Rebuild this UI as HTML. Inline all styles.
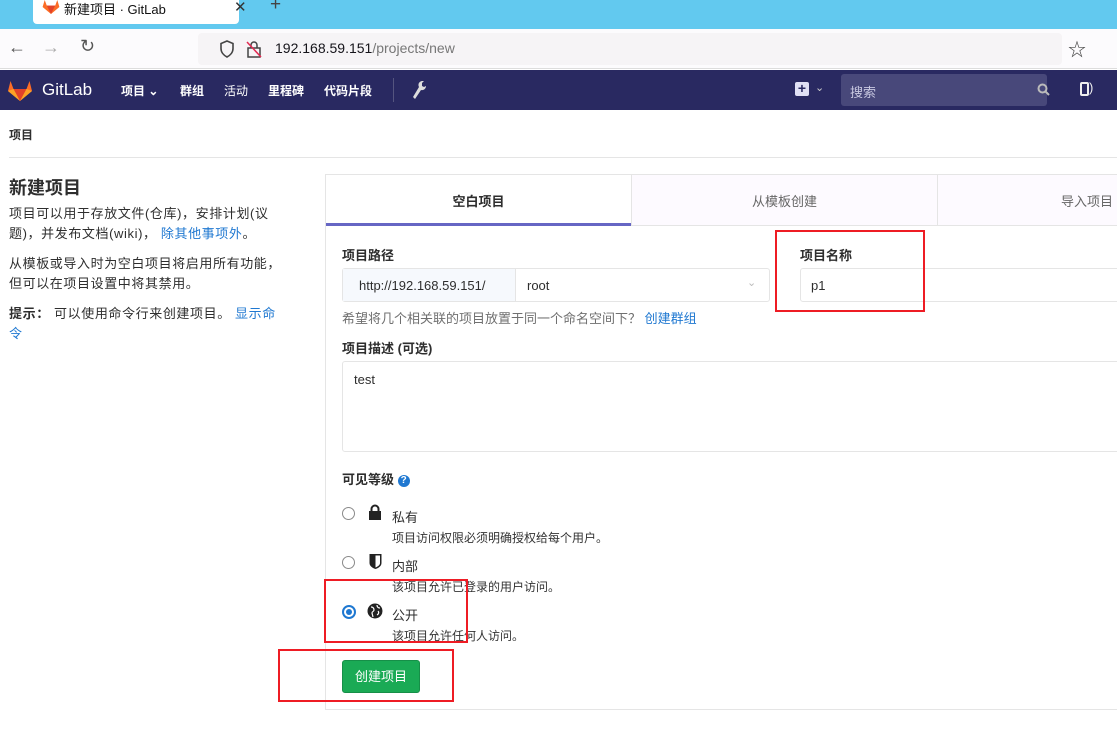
<!DOCTYPE html>
<html><head><meta charset="utf-8"><style>
*{box-sizing:border-box;margin:0;padding:0}
body{width:1117px;height:748px;overflow:hidden;background:#fff;font-family:"Liberation Sans","Noto Sans CJK SC",sans-serif;color:#2e2e2e;font-size:13px;position:relative}
.a{position:absolute}
.lbl{font-weight:bold;font-size:13px;color:#2e2e2e}
.red{position:absolute;border:2px solid #ee1c24}
.rad{position:absolute;width:13px;height:13px;border-radius:50%;border:1.5px solid #8a8a8a;background:#fff}
.lp{position:absolute;left:9px;width:282px;font-size:13px;line-height:20px;letter-spacing:0.6px;word-break:break-all}
</style></head><body>
<div class="a" style="left:0;top:0;width:1117px;height:29px;background:#62c9ef"></div>
<div class="a" style="left:33px;top:0;width:206px;height:24px;background:#fff;border-radius:0 0 4px 4px"></div>
<svg class="a" style="left:42px;top:0" width="18" height="14" viewBox="0 0 24 20"><path d="M12 20L0 10 3 0 6 8h12l3-8 3 10z" fill="#fc6d26"/><path d="M12 20L6 8h12z" fill="#e24329"/></svg>
<div class="a" style="left:64px;top:-1px;font-size:13px;color:#111">新建项目 · GitLab</div>
<div class="a" style="left:234px;top:-2px;font-size:15px;color:#333">✕</div>
<div class="a" style="left:270px;top:-6px;font-size:19px;color:#444">+</div>
<div class="a" style="left:0;top:29px;width:1117px;height:40px;background:#fcfbfd;border-bottom:1px solid #ddd"></div>
<div class="a" style="left:8px;top:37px;font-size:18px;color:#555">←</div>
<div class="a" style="left:42px;top:37px;font-size:18px;color:#aaa">→</div>
<div class="a" style="left:80px;top:36px;font-size:18px;color:#555">↻</div>
<div class="a" style="left:198px;top:33px;width:864px;height:32px;background:#f6f4f6;border-radius:4px"></div>
<svg class="a" style="left:219px;top:40px" width="16" height="18" viewBox="0 0 16 18"><path d="M8 1L2 3.5v5c0 4 3 7 6 8.5 3-1.5 6-4.5 6-8.5v-5z" fill="none" stroke="#444" stroke-width="1.6"/></svg>
<svg class="a" style="left:246px;top:40px" width="16" height="18" viewBox="0 0 16 18"><rect x="2" y="8" width="12" height="9" fill="none" stroke="#444" stroke-width="1.5"/><path d="M5 8V5a3 3 0 016 0v3" fill="none" stroke="#444" stroke-width="1.5"/><path d="M1 2l14 15" stroke="#e22850" stroke-width="1.5"/></svg>
<div class="a" style="left:275px;top:40px;font-size:14px;color:#15141a">192.168.59.151<span style="color:#777">/projects/new</span></div>
<div class="a" style="left:1068px;top:36px;font-size:18px;color:#444">☆</div>
<div class="a" style="left:0;top:70px;width:1117px;height:40px;background:#292961"></div>
<svg class="a" style="left:8px;top:78px" width="24" height="24" viewBox="0 0 24 22"><path d="M12 22L0 12 2.5 2 5.5 10h13l3-8L24 12z" fill="#fc6d26"/><path d="M12 22L5.5 10h13z" fill="#e24329"/><path d="M0 12l5.5-2L12 22z" fill="#fca326"/><path d="M24 12l-5.5-2L12 22z" fill="#fca326"/></svg>
<div class="a" style="left:42px;top:80px;font-size:17px;color:#fff">GitLab</div>
<div class="a" style="left:121px;top:82px;font-size:12px;color:#fff;font-weight:bold">项目 ⌄</div>
<div class="a" style="left:180px;top:82px;font-size:12px;color:#fff;font-weight:bold">群组</div>
<div class="a" style="left:224px;top:82px;font-size:12px;color:#fff">活动</div>
<div class="a" style="left:268px;top:82px;font-size:12px;color:#fff;font-weight:bold">里程碑</div>
<div class="a" style="left:324px;top:82px;font-size:12px;color:#fff;font-weight:bold">代码片段</div>
<div class="a" style="left:393px;top:78px;width:1px;height:24px;background:#55557f"></div>
<svg class="a" style="left:411px;top:80px" width="16" height="20" viewBox="0 0 16 20"><path d="M11 1a4 4 0 00-3 6L2 17l2 2 6-9a4 4 0 005-4l-2 1-2-1V3l2-2z" fill="#ddd"/></svg>
<div class="a" style="left:795px;top:82px;width:14px;height:14px;background:#e0e0f5;border-radius:2px;color:#292961;font-size:14px;line-height:13px;text-align:center;font-weight:bold">+</div>
<div class="a" style="left:815px;top:81px;font-size:11px;color:#ccc">⌄</div>
<div class="a" style="left:841px;top:74px;width:206px;height:32px;background:#48487a;border-radius:3px"></div>
<div class="a" style="left:850px;top:82px;font-size:13px;color:#c8c8e0">搜索</div>
<svg class="a" style="left:1037px;top:83px" width="13" height="13" viewBox="0 0 13 13"><circle cx="5.5" cy="5.5" r="4" fill="none" stroke="#bbb" stroke-width="2"/><path d="M8.5 8.5L12 12" stroke="#bbb" stroke-width="2"/></svg>
<div class="a" style="left:1080px;top:82px;width:9px;height:14px;border:2px solid #eee;border-radius:2px"></div>
<div class="a" style="left:1089px;top:80px;font-size:13px;color:#eee">)</div>
<div class="a lbl" style="left:9px;top:126px;font-size:12px">项目</div>
<div class="a" style="left:9px;top:157px;width:1108px;height:1px;background:#e5e5e5"></div>
<div class="a" style="left:9px;top:174px;font-size:18px;font-weight:bold;color:#2e2e2e">新建项目</div>
<div class="lp" style="top:204px">项目可以用于存放文件(仓库)，安排计划(议题)，并发布文档(wiki)， <span style="color:#1f78d1">除其他事项外</span>。</div>
<div class="lp" style="top:254px">从模板或导入时为空白项目将启用所有功能，但可以在项目设置中将其禁用。</div>
<div class="lp" style="top:304px;width:279px"><b>提示：</b> 可以使用命令行来创建项目。 <span style="color:#1f78d1">显示命令</span></div>
<div class="a" style="left:325px;top:174px;width:800px;height:536px;border:1px solid #e5e5e5;border-right:none"></div>
<div class="a" style="left:631px;top:175px;width:486px;height:50px;background:#fdfaff;border-left:1px solid #e5e5e5"></div>
<div class="a" style="left:937px;top:175px;width:1px;height:50px;background:#e5e5e5"></div>
<div class="a" style="left:326px;top:225px;width:791px;height:1px;background:#e5e5e5"></div>
<div class="a" style="left:326px;top:223px;width:305px;height:3px;background:#6666c4"></div>
<div class="a" style="left:326px;top:191px;width:305px;text-align:center;font-weight:bold;font-size:13px">空白项目</div>
<div class="a" style="left:632px;top:191px;width:305px;text-align:center;font-size:13px;color:#666">从模板创建</div>
<div class="a" style="left:1061px;top:191px;font-size:13px;color:#666;white-space:nowrap">导入项目</div>
<div class="a lbl" style="left:342px;top:245px">项目路径</div>
<div class="a" style="left:342px;top:268px;width:428px;height:34px;border:1px solid #e5e5e5;border-radius:3px"></div>
<div class="a" style="left:343px;top:269px;width:173px;height:32px;background:#f6f9fd;border-right:1px solid #e5e5e5"></div>
<div class="a" style="left:359px;top:278px;font-size:13px">http://192.168.59.151/</div>
<div class="a" style="left:527px;top:278px;font-size:13px">root</div>
<div class="a" style="left:747px;top:276px;font-size:11px;color:#bbb">⌄</div>
<div class="a lbl" style="left:800px;top:245px">项目名称</div>
<div class="a" style="left:800px;top:268px;width:330px;height:34px;border:1px solid #e5e5e5;border-radius:3px"></div>
<div class="a" style="left:811px;top:278px;font-size:13px">p1</div>
<div class="a" style="left:342px;top:308px;font-size:13px;color:#707070">希望将几个相关联的项目放置于同一个命名空间下？ <span style="color:#1f78d1">创建群组</span></div>
<div class="a lbl" style="left:342px;top:338px">项目描述 (可选)</div>
<div class="a" style="left:342px;top:361px;width:790px;height:91px;border:1px solid #e5e5e5;border-radius:3px"></div>
<div class="a" style="left:354px;top:372px;font-size:13px">test</div>
<div class="a lbl" style="left:342px;top:469px">可见等级 <span style="display:inline-block;width:12px;height:12px;border-radius:50%;background:#1f78d1;color:#fff;font-size:10px;line-height:12px;text-align:center;vertical-align:1px">?</span></div>
<div class="rad" style="left:342px;top:507px"></div>
<svg class="a" style="left:368px;top:504px" width="14" height="16" viewBox="0 0 14 16"><path d="M3.5 7V5a3.5 3.5 0 017 0v2" fill="none" stroke="#222" stroke-width="2"/><rect x="1" y="7" width="12" height="9" fill="#222"/></svg>
<div class="a" style="left:392px;top:507px;font-size:13px">私有</div>
<div class="a" style="left:392px;top:529px;font-size:12px;color:#333">项目访问权限必须明确授权给每个用户。</div>
<div class="rad" style="left:342px;top:556px"></div>
<svg class="a" style="left:369px;top:553px" width="13" height="16" viewBox="0 0 13 16"><path d="M0.5 1h12v9c0 3-3 5-6 6-3-1-6-3-6-6z" fill="#222"/><path d="M6.5 2.5h4.5v7.5c0 2-2 3.5-4.5 4.5z" fill="#fff"/></svg>
<div class="a" style="left:392px;top:556px;font-size:13px">内部</div>
<div class="a" style="left:392px;top:578px;font-size:12px;color:#333">该项目允许已登录的用户访问。</div>
<div class="a" style="left:342px;top:605px;width:14px;height:14px;border-radius:50%;border:2px solid #1f78d1;background:#fff"><div style="margin:2px;width:6px;height:6px;border-radius:50%;background:#1f78d1"></div></div>
<svg class="a" style="left:367px;top:603px" width="16" height="16" viewBox="0 0 16 16"><circle cx="8" cy="8" r="7.5" fill="#222"/><path d="M4 4c2 0 3 1 3 3s-2 1-2 3l1 4M10 2c0 2 1 3 3 3M11 8c1 1 1 3-1 4" stroke="#fff" stroke-width="1.2" fill="none"/></svg>
<div class="a" style="left:392px;top:605px;font-size:13px">公开</div>
<div class="a" style="left:392px;top:627px;font-size:12px;color:#333">该项目允许任何人访问。</div>
<div class="a" style="left:342px;top:660px;width:78px;height:33px;background:#1aaa55;border:1px solid #168f48;border-radius:3px;color:#fff;font-size:13px;text-align:center;line-height:31px">创建项目</div>
<div class="red" style="left:775px;top:230px;width:150px;height:82px"></div>
<div class="red" style="left:324px;top:579px;width:144px;height:64px"></div>
<div class="red" style="left:278px;top:649px;width:176px;height:53px"></div>
</body></html>
